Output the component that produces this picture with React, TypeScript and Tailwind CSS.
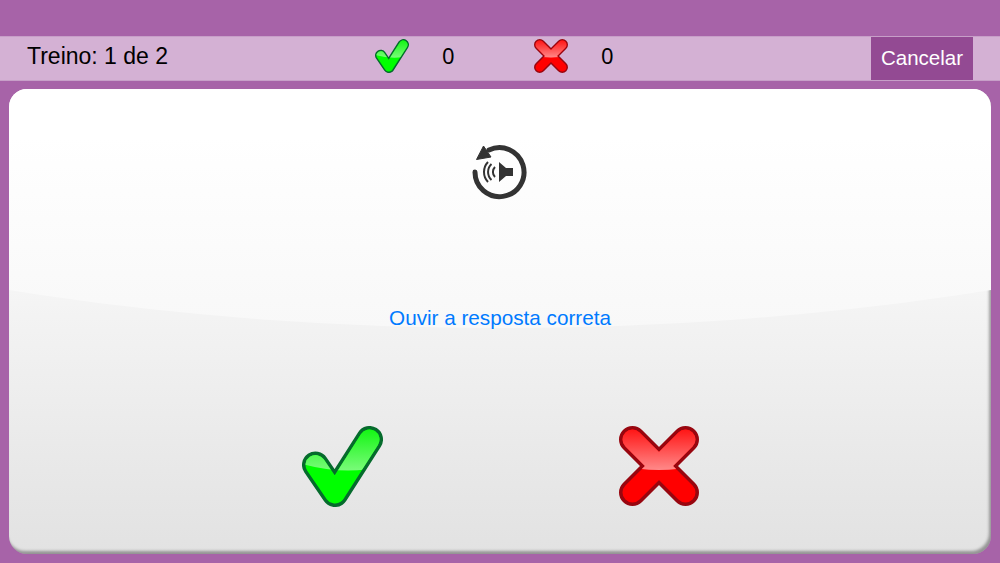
function CheckIcon({ className }: { className: string }) {
  const points = "13.5,39 33,67.5 67.5,13.5";
  return (
    <svg viewBox="0 0 81 81" className={className}>
      <defs>
        <linearGradient id="checkGloss" gradientUnits="userSpaceOnUse" x1="0" y1="0" x2="0" y2="46">
          <stop offset="0" stopColor="#0cf50c" />
          <stop offset="1" stopColor="#7dfb7d" />
        </linearGradient>
        <clipPath id="checkClip">
          <path d="M0 0 H81 V40 Q45 50 0 38 Z" />
        </clipPath>
      </defs>
      <polyline points={points} fill="none" stroke="#056b2c" strokeWidth="27" strokeLinecap="round" strokeLinejoin="round" />
      <polyline points={points} fill="none" stroke="#00ff00" strokeWidth="20" strokeLinecap="round" strokeLinejoin="round" />
      <polyline points={points} fill="none" stroke="url(#checkGloss)" strokeWidth="20" strokeLinecap="round" strokeLinejoin="round" clipPath="url(#checkClip)" />
    </svg>
  );
}

function CrossIcon({ className }: { className: string }) {
  const lines = "M13.5 13.5 L66.5 66.5 M66.5 13.5 L13.5 66.5";
  return (
    <svg viewBox="0 0 80 80" className={className}>
      <defs>
        <linearGradient id="crossGloss" gradientUnits="userSpaceOnUse" x1="0" y1="0" x2="0" y2="46">
          <stop offset="0" stopColor="#ff0c0c" />
          <stop offset="1" stopColor="#ff8f8f" />
        </linearGradient>
        <clipPath id="crossClip">
          <path d="M0 0 H80 V39 Q40 49 0 39 Z" />
        </clipPath>
      </defs>
      <path d={lines} fill="none" stroke="#98060f" strokeWidth="27" strokeLinecap="round" />
      <path d={lines} fill="none" stroke="#ff0000" strokeWidth="20" strokeLinecap="round" />
      <path d={lines} fill="none" stroke="url(#crossGloss)" strokeWidth="20" strokeLinecap="round" clipPath="url(#crossClip)" />
    </svg>
  );
}

function ReplayIcon() {
  return (
    <svg viewBox="0 0 80 75" className="h-[75px] w-20 text-[#333]">
      <path d="M15 37 A24.5 24.5 0 1 0 29 15" fill="none" stroke="currentColor" strokeWidth="5" strokeLinecap="round" />
      <path d="M23.5 11 L16.5 24.5 L31 22 Z" fill="currentColor" stroke="currentColor" strokeLinejoin="round" />
      <path d="M39 27 L39 47 L46 41 L53 41 L53 33 L46 33 Z" fill="currentColor" />
      <g fill="none" stroke="currentColor" strokeWidth="2">
        <path d="M35 32 A7 7 0 0 0 35 42" />
        <path d="M31.5 29 A11 11 0 0 0 31.5 45" />
        <path d="M28 27 A14.5 14.5 0 0 0 28 47" />
      </g>
    </svg>
  );
}

export default function App() {
  return (
    <div className="flex h-[563px] w-[1000px] flex-col overflow-hidden bg-[#a763a8] pt-9 font-['Liberation_Sans',Arial,sans-serif]">
      <div className="flex h-[45px] items-stretch border-y border-[#c79fc8] bg-[#d4b1d4] pl-[27px] pr-[27px] text-black">
        <div className="flex w-[348px] items-center pb-[5px] text-[23px]">Treino: 1 de 2</div>
        <div className="flex w-[159px] items-center pb-[6px]">
          <CheckIcon className="h-[34px] w-[34px]" />
          <span className="ml-[33px] font-['Noto_Sans',sans-serif] text-[22px]">0</span>
        </div>
        <div className="flex items-center pb-[6px]">
          <CrossIcon className="h-[34px] w-[34px]" />
          <span className="ml-[33px] font-['Noto_Sans',sans-serif] text-[22px]">0</span>
        </div>
        <button className="ml-auto w-[102px] bg-[#934a93] text-[20.5px] text-white">Cancelar</button>
      </div>

      <div className="relative mx-[9px] mt-2 flex h-[465px] flex-col items-center overflow-hidden rounded-[18px] bg-[linear-gradient(180deg,#f5f5f5_43%,#e2e2e2_100%)] shadow-[inset_-2px_-3px_3px_rgba(0,0,0,0.35)]">
        <div className="absolute left-[-709px] top-[-629px] h-[868px] w-[2400px] rounded-[50%] bg-[linear-gradient(180deg,#fff_78%,#f8f8f8_100%)]" />
        <div className="relative mt-[46px]">
          <ReplayIcon />
        </div>
        <a className="relative mt-[92px] text-[20.7px] text-[#007aff]">Ouvir a resposta correta</a>
        <div className="relative mt-[93px] flex w-[397px] justify-between">
          <CheckIcon className="h-[81px] w-[81px]" />
          <CrossIcon className="h-[80px] w-[80px]" />
        </div>
      </div>
    </div>
  );
}
